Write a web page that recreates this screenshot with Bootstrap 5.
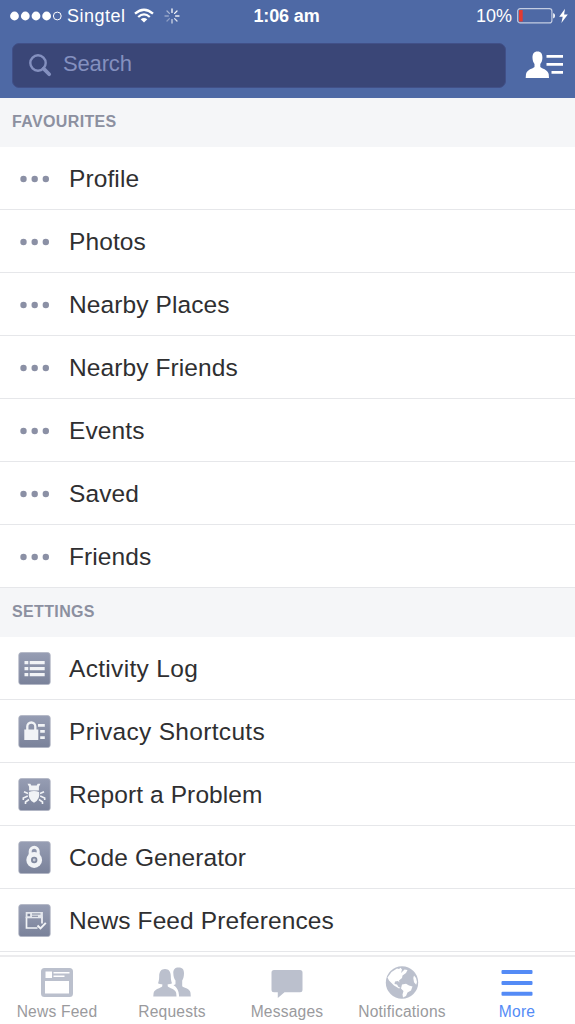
<!DOCTYPE html>
<html lang="en">
<head>
<meta charset="utf-8">
<meta name="viewport" content="width=device-width, initial-scale=1">
<title>More</title>
<link href="https://cdn.jsdelivr.net/npm/bootstrap@5.3.0/dist/css/bootstrap.min.css" rel="stylesheet">
<style>
body{font-family:"Liberation Sans",Arial,sans-serif;color:#2f2f31;background:#fff;height:1024px;overflow:hidden}
svg{display:block;flex:none}
.topbar{background:#4e69a5;height:98px;color:#fff}
.status{height:32px;font-size:18px;line-height:32px;padding:0 7px 0 10px}
.status>div{flex:1 1 0}
.search-box{background:#3a4677;border-radius:7px;width:494px;height:45px;margin:10.500px 0 0 12px;padding-left:16px;color:#8490bf;font-size:22px;letter-spacing:-.15px;border:1px solid #415088}
.search-box span{margin-left:11px;padding-bottom:3px}
.section-title{background:#f5f6f8;color:#8c90a0;height:49px;padding:0 12px 1px;font-size:16px;font-weight:700;letter-spacing:.36px;margin:0}
.menu-row{height:63px;padding:1px 0 0 18px;border:0;border-bottom:1px solid #e6e7ea;font-size:24.5px;letter-spacing:.1px;line-height:1;color:inherit;background:#fff}
.menu-row span{padding-top:2px}
.menu-row .looser{letter-spacing:.32px}
.menu-row svg{margin-right:18px}
.tabs{height:69px;border-top:2px solid #ececee;color:#9a9a9d;font-size:15.6px;letter-spacing:.2px;background:#fff}
.tabs a{color:inherit;width:115px;text-decoration:none;line-height:18px;padding:8px 1px 0 0}
.tabs svg{color:#bbc0cd;margin-bottom:3px}
.tabs a.on,.tabs a.on svg{color:#548bf6}
</style>
</head>
<body class="d-flex flex-column">
<svg width="0" height="0" class="position-absolute" aria-hidden="true">
<defs>
<linearGradient id="tile" x1="0" y1="0" x2="0" y2="1"><stop offset="0" stop-color="#969db3"/><stop offset="1" stop-color="#7a829a"/></linearGradient>
<symbol id="dots" viewBox="0 0 33 33"><g fill="#8b90a5"><circle cx="5.500" cy="17" r="3.200"/><circle cx="16.700" cy="17" r="3.200"/><circle cx="27.800" cy="17" r="3.200"/></g></symbol>
<symbol id="box" viewBox="0 0 33 33"><rect x=".8" y=".6" width="31.400" height="32" rx="2.500" fill="url(#tile)" stroke="#aeb3c2" stroke-width=".8"/></symbol>
</defs>
</svg>

<header class="topbar flex-shrink-0">
  <div class="status d-flex align-items-center">
    <div class="d-flex align-items-center">
      <svg width="53" height="12" viewBox="0 0 53 12" fill="#fff"><circle cx="4.500" cy="6" r="4.400"/><circle cx="15.300" cy="6" r="4.400"/><circle cx="26" cy="6" r="4.400"/><circle cx="36.600" cy="6" r="4.400"/><circle cx="47.300" cy="6" r="3.900" fill="none" stroke="#fff"/></svg>
      <span style="margin-left:4px;letter-spacing:.5px">Singtel</span>
      <svg style="margin-left:8.500px" width="20" height="16" viewBox="0 0 20 16" fill="none" stroke="#fff" stroke-width="2.300"><path d="M1 5.700Q10-2.200 19 5.700M4.200 9Q10 3.800 15.800 9"/><path d="M10 14.500L6.700 11.200Q10 8.600 13.300 11.200z" fill="#fff" stroke="none"/></svg>
      <svg style="margin-left:9.500px" width="16" height="16" viewBox="-8 -8 16 16" stroke="#fff" stroke-width="1.300" stroke-linecap="round"><path d="M0-7V-3.600"/><path d="M5-5L2.600-2.600" opacity=".95"/><path d="M7 0H3.600" opacity=".9"/><path d="M5 5L2.600 2.600" opacity=".8"/><path d="M0 7V3.600" opacity=".7"/><path d="M-5 5L-2.600 2.600" opacity=".35"/><path d="M-7 0H-3.600" opacity=".4"/><path d="M-5-5L-2.600-2.600" opacity=".5"/></svg>
    </div>
    <span class="fw-bold" style="letter-spacing:-.15px;margin-right:5px">1:06 am</span>
    <div class="d-flex align-items-center justify-content-end">
      <span>10%</span>
      <svg style="margin-left:5px" width="39" height="16" viewBox="0 0 39 16"><rect x=".7" y=".7" width="34.200" height="14.200" rx="2.500" fill="none" stroke="#c4cde2" stroke-width="1.200"/><path d="M2 2H5.700V13.500H2z" fill="#e23b32"/><path d="M36.200 5Q38 5.500 38 7.800T36.200 10.600z" fill="#fff"/></svg>
      <svg style="margin-left:3px" width="9" height="16" viewBox="0 0 9 16"><path d="M6 .8L.2 8.700H3.700L2.400 15 8.800 6.500H5.100z" fill="#fff"/></svg>
    </div>
  </div>
  <div class="d-flex">
    <div class="search-box d-flex align-items-center">
      <svg width="23" height="23" viewBox="0 0 23 23" fill="none" stroke="#8490bf"><circle cx="9" cy="9" r="7.700" stroke-width="2.400"/><path d="M14.600 14.600L20.200 20.200" stroke-width="3.700" stroke-linecap="round"/></svg>
      <span>Search</span>
    </div>
    <svg style="margin:19px 0 0 19px" width="39" height="28" viewBox="0 0 39 28" fill="#fff"><path d="M12.500.5C8.800.5 7.300 3.200 7.500 7c.1 2.600.9 4.500 2 6v3c-1.500 1.800-7.500 2.200-8.500 7L.7 27H24l-.3-4c-1-4.800-7-5.200-8.400-7v-3c1.200-1.500 2-3.400 2.100-6C17.600 3.200 16.200.5 12.500.5z"/><path d="M21.500 4H38v2.800H21.500zM21.500 12H38v2.800H21.500zM26.500 20H38v2.800H26.500z"/></svg>
  </div>
</header>

<main class="flex-grow-1 overflow-hidden">
  <h2 class="section-title d-flex align-items-center">FAVOURITES</h2>
  <div>
    <div class="menu-row d-flex align-items-center"><svg width="33" height="33"><use href="#dots"/></svg><span>Profile</span></div>
    <div class="menu-row d-flex align-items-center"><svg width="33" height="33"><use href="#dots"/></svg><span>Photos</span></div>
    <div class="menu-row d-flex align-items-center"><svg width="33" height="33"><use href="#dots"/></svg><span>Nearby Places</span></div>
    <div class="menu-row d-flex align-items-center"><svg width="33" height="33"><use href="#dots"/></svg><span>Nearby Friends</span></div>
    <div class="menu-row d-flex align-items-center"><svg width="33" height="33"><use href="#dots"/></svg><span>Events</span></div>
    <div class="menu-row d-flex align-items-center"><svg width="33" height="33"><use href="#dots"/></svg><span>Saved</span></div>
    <div class="menu-row d-flex align-items-center"><svg width="33" height="33"><use href="#dots"/></svg><span>Friends</span></div>
  </div>
  <h2 class="section-title d-flex align-items-center">SETTINGS</h2>
  <div>
    <div class="menu-row d-flex align-items-center">
      <svg width="33" height="33" viewBox="0 0 33 33"><use href="#box"/><path d="M6.500 9h3.800v3.300H6.500zM11.700 9h15v3.300h-15zM6.500 15h3.800v3.300H6.500zM11.700 15h15v3.300h-15zM6.500 21h3.800v3.300H6.500zM11.700 21h15v3.300h-15z" fill="#f1f3f6"/></svg><span class="looser">Activity Log</span></div>
    <div class="menu-row d-flex align-items-center">
      <svg width="33" height="33" viewBox="0 0 33 33"><use href="#box"/><path d="M9.300 16V11.500a4 4 0 0 1 8 0V16" fill="none" stroke="#f1f3f6" stroke-width="2.300"/><path d="M6.300 14.500h14v10.500h-14zM20 9h6.800v2.700H20zM22.200 15h4.600v2.700h-4.600zM22.200 21.200h4.600v2.700h-4.600z" fill="#f1f3f6"/></svg><span class="looser">Privacy Shortcuts</span></div>
    <div class="menu-row d-flex align-items-center">
      <svg width="33" height="33" viewBox="0 0 33 33"><use href="#box"/><path d="M9.500 5.800h2.800l1 1.800h5.400l1-1.800h2.800l-1.600 3v3.700h-9.800V8.800z" fill="#f1f3f6"/><path d="M11 14Q16 12 21 14q1.700 7-5 10.800Q9.300 21 11 14z" fill="#f1f3f6"/><path d="M10 15.500L6 13.800M9.800 18L5.300 20V22M11 21.500L7.500 24V26M22 15.500L26 13.800M22.200 18L26.700 20V22M21 21.500L24.500 24V26" fill="none" stroke="#f1f3f6" stroke-width="1.600"/></svg><span>Report a Problem</span></div>
    <div class="menu-row d-flex align-items-center">
      <svg width="33" height="33" viewBox="0 0 33 33"><use href="#box"/><path d="M12.200 14V10.300a4 4 0 0 1 8 0V14" fill="none" stroke="#f1f3f6" stroke-width="3"/><circle cx="16.200" cy="19" r="7.900" fill="#f1f3f6"/><circle cx="16.200" cy="19" r="2.300" fill="#c7cbd7" stroke="#81899f" stroke-width="1.800"/></svg><span>Code Generator</span></div>
    <div class="menu-row d-flex align-items-center">
      <svg width="33" height="33" viewBox="0 0 33 33"><use href="#box"/><path d="M19.500 24H8.500V13.500H24V19.500" fill="none" stroke="#f1f3f6" stroke-width="1.700"/><path d="M7.700 8h17.200V14H7.700z" fill="#e4e7ed"/><path d="M9.500 9.700h2.600v2.600H9.500zM14 9.500h8.500v1.100H14zM14 11.700h6v1.100h-6z" fill="#7d859c"/><path d="M19.500 21.500l3 2.900 5.300-5.500" fill="none" stroke="#f1f3f6" stroke-width="2"/></svg><span>News Feed Preferences</span></div>
  </div>
</main>

<nav class="tabs d-flex flex-shrink-0">
  <a href="#" class="d-flex flex-column align-items-center">
    <svg width="38" height="35" viewBox="0 0 38 35"><path fill="currentColor" fill-rule="evenodd" d="M6.500 3h25A3.500 3.500 0 0 1 35 6.500v22a3.500 3.500 0 0 1-3.500 3.500h-25A3.500 3.500 0 0 1 3 28.500v-22A3.500 3.500 0 0 1 6.500 3zM7.500 6.500v6.500h6.500V6.500zM15.500 7v1.500h16V7zM15.500 10.500V12h11v-1.500zM7 16v12.500h24V16z"/></svg>News Feed</a>
  <a href="#" class="d-flex flex-column align-items-center">
    <svg width="38" height="35" viewBox="0 0 38 35"><path fill="currentColor" d="M25.500 2.500c-3.500 0-5.300 2-5.200 5.500.1 3.500.9 6 2.200 7.500v3.700l-2 1c3.500 2 5.400 5.500 5.600 11.300H37.800l-.3-3.700c-.7-4.600-6-4.600-8.300-6.600v-5.700c1-1.500 1.700-3.700 1.800-7C31.100 4 29 2.500 25.500 2.500z"/><path fill="currentColor" d="M12 4c-3.900 0-5.800 2.800-5.800 7 0 3-.4 5.500-1.200 7.300 1.200.8 2.700 1 4.300 1v1.900C7.800 23.300 1.500 23.500.6 28L.3 31.500h23.200L23.200 28c-.8-4.500-7-4.700-8.500-6.800v-1.900c1.600 0 3.100-.2 4.300-1-.8-1.800-1.200-4.300-1.200-7.300 0-4.200-1.900-7-5.800-7z"/></svg>Requests</a>
  <a href="#" class="d-flex flex-column align-items-center">
    <svg width="38" height="35" viewBox="0 0 38 35"><path fill="currentColor" d="M6 5h26a2.500 2.500 0 0 1 2.500 2.500v17.300a2.500 2.500 0 0 1-2.500 2.500H16.500L9.800 33V27.300H6a2.500 2.500 0 0 1-2.500-2.500V7.500A2.500 2.500 0 0 1 6 5z"/></svg>Messages</a>
  <a href="#" class="d-flex flex-column align-items-center">
    <svg width="38" height="35" viewBox="0 0 38 35"><circle cx="19" cy="17.500" r="16.200" fill="currentColor"/><path fill="#fff" d="M8.500 7L14 3.500l2 .5 1.500-1.200 1.500 1.700-1 3.500 3.500-3.500 3 .5-1.500 3-3.500 2.500-.5 2.500-3 2.500.5 2-1.500-1.500-3 .5-.5 2.500 2.500.5 1.500 2.500 2 .7-1.500.8L11 20.500 6 15.500l-1.500-3zM19 19.500l4-.7 3 1.700 3.500 1-1.500 4-3.500 2-1.500 3.500L20 32.500l-.5-3 1-3.500-2.500-2.500zM31 10.500l2 2.500 1 4-.8 2.700-2.200-2.500-.7-4.200z"/></svg>Notifications</a>
  <a href="#" class="on d-flex flex-column align-items-center">
    <svg width="38" height="35" viewBox="0 0 38 35" fill="currentColor"><rect x="3.500" y="5" width="31" height="3.900" rx="1"/><rect x="3.500" y="16" width="31" height="3.900" rx="1"/><rect x="3.500" y="26.800" width="31" height="3.900" rx="1"/></svg>More</a>
</nav>
<script src="https://cdn.jsdelivr.net/npm/bootstrap@5.3.0/dist/js/bootstrap.bundle.min.js"></script>
</body>
</html>
